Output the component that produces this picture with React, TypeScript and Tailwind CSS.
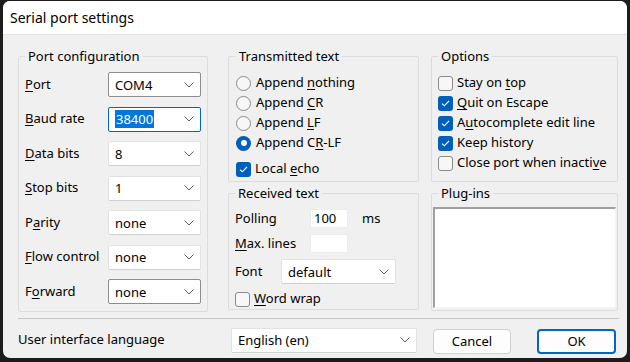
import type { ReactNode } from 'react';

const font = { fontFamily: '"Noto Sans", "Liberation Sans", sans-serif' };

function U({ children }: { children: ReactNode }) {
  return <span className="underline underline-offset-2 decoration-1">{children}</span>;
}

function Chevron() {
  return (
    <svg width="10" height="6" viewBox="0 0 10 6" className="shrink-0">
      <path d="M0.5 0.5 L5 5 L9.5 0.5" fill="none" stroke="#5f5f5f" strokeWidth="1" />
    </svg>
  );
}

function Combo({ value, w, dark, focus, selected }: { value: string; w: string; dark?: boolean; focus?: boolean; selected?: boolean }) {
  const border = focus ? 'border-[#0067c0]' : dark ? 'border-[#8c8c8c]' : 'border-[#e2e2e2] border-b-[#d0d0d0]';
  return (
    <div className={`${w} h-[25px] bg-white border ${border} rounded-[2px] flex items-center justify-between pl-[6px] pr-[6px]`}>
      {selected ? (
        <span className="bg-[#0078d7] text-white px-[1px] leading-[18px]">{value}</span>
      ) : (
        <span className="leading-[18px]">{value}</span>
      )}
      <Chevron />
    </div>
  );
}

function Group({ title, className, legend, children }: { title: string; className: string; legend: string; children: ReactNode }) {
  return (
    <fieldset className={`border border-[#dcdcdc] rounded-[2px] ${className}`}>
      <legend className={`${legend} px-[3px] leading-[18px] text-[13px]`}>{title}</legend>
      {children}
    </fieldset>
  );
}

function Radio({ on, children }: { on?: boolean; children: ReactNode }) {
  return (
    <div className="h-[20px] flex items-center gap-[5px]">
      {on ? (
        <span className="w-[15px] h-[15px] rounded-full bg-[#005fb8] flex items-center justify-center">
          <span className="w-[6px] h-[6px] rounded-full bg-white" />
        </span>
      ) : (
        <span className="w-[15px] h-[15px] rounded-full border border-[#8a8a8a] bg-[#f7f7f7]" />
      )}
      <span>{children}</span>
    </div>
  );
}

function Check({ on, children }: { on?: boolean; children: ReactNode }) {
  return (
    <div className="h-[20px] flex items-center gap-[4px]">
      {on ? (
        <span className="w-[15px] h-[15px] rounded-[3px] bg-[#005fb8] flex items-center justify-center">
          <svg width="9" height="7" viewBox="0 0 9 7">
            <path d="M1 3.6 L3.3 5.8 L8 1" fill="none" stroke="white" strokeWidth="1.1" />
          </svg>
        </span>
      ) : (
        <span className="w-[15px] h-[15px] rounded-[3px] border border-[#8a8a8a] bg-[#f7f7f7]" />
      )}
      <span>{children}</span>
    </div>
  );
}

const rows: { label: ReactNode; value: string; dark?: boolean; focus?: boolean; selected?: boolean }[] = [
  { label: <><U>P</U>ort</>, value: 'COM4', dark: true },
  { label: <><U>B</U>aud rate</>, value: '38400', focus: true, selected: true },
  { label: <><U>D</U>ata bits</>, value: '8' },
  { label: <><U>S</U>top bits</>, value: '1' },
  { label: <>P<U>a</U>rity</>, value: 'none' },
  { label: <><U>F</U>low control</>, value: 'none' },
  { label: <>F<U>o</U>rward</>, value: 'none', dark: true },
];

export default function App() {
  return (
    <div className="w-[630px] h-[362px] bg-[#1c1c1c] pl-[3px] pt-[1px] overflow-hidden" style={font}>
      <div className="w-[624px] h-[357px] rounded-[7px] overflow-hidden flex flex-col bg-[#f0f0f0] text-[13px] text-black">
        <div className="h-[34px] shrink-0 bg-white border-b border-[#e3e3e3] flex items-center pl-[7px] text-[14px]">
          Serial port settings
        </div>
        <div className="flex-1 pl-[15px] pr-[8px] pt-[12px]">
          <div className="flex">
            <Group title="Port configuration" legend="ml-0" className="w-[190px] h-[265px] px-[6px] pt-[7px]">
              <div className="flex flex-col gap-[9.5px]">
                {rows.map((r, i) => (
                  <div key={i} className="flex items-center justify-between">
                    <span>{r.label}</span>
                    <Combo value={r.value} w="w-[93px]" dark={r.dark} focus={r.focus} selected={r.selected} />
                  </div>
                ))}
              </div>
            </Group>

            <div className="w-[191px] ml-[20px] flex flex-col">
              <Group title="Transmitted text" legend="ml-0" className="h-[135px] px-[7px] pt-[8px]">
                <Radio>Append <U>n</U>othing</Radio>
                <Radio>Append <U>C</U>R</Radio>
                <Radio>Append <U>L</U>F</Radio>
                <Radio on>Append C<U>R</U>-LF</Radio>
                <div className="mt-[6px]">
                  <Check on>Local <U>e</U>cho</Check>
                </div>
              </Group>
              <Group title="Received text" legend="ml-0" className="mt-[2px] h-[126px] px-[6px] pt-[7px]">
                <div className="flex items-center h-[19px]">
                  <span className="w-[75px]">Polling</span>
                  <span className="w-[38px] h-[19px] bg-white border border-[#ececec] px-[3px] leading-[17px]">100</span>
                  <span className="ml-[14px]">ms</span>
                </div>
                <div className="flex items-center h-[19px] mt-[6px]">
                  <span className="w-[75px]"><U>M</U>ax. lines</span>
                  <span className="w-[38px] h-[19px] bg-white border border-[#ececec]" />
                </div>
                <div className="flex items-center mt-[6px]">
                  <span className="w-[46px]">Font</span>
                  <Combo value="default" w="w-[115px]" />
                </div>
                <div className="mt-[5px]">
                  <Check><U>W</U>ord wrap</Check>
                </div>
              </Group>
            </div>

            <div className="w-[187px] ml-[12px] flex flex-col">
              <Group title="Options" legend="ml-0" className="h-[135px] px-[6px] pt-[8px]">
                <Check>Stay on <U>t</U>op</Check>
                <Check on><U>Q</U>uit on Escape</Check>
                <Check on>A<U>u</U>tocomplete edit line</Check>
                <Check on>Keep history</Check>
                <Check>Close port when inacti<U>v</U>e</Check>
              </Group>
              <Group title="Plug-ins" legend="ml-[5px]" className="mt-[2px] h-[127px] px-[1px] pt-[5px] pb-[2px]">
                <div className="h-[101px] bg-white border-t-2 border-l-2 border-t-[#a0a0a0] border-l-[#a0a0a0] border-r border-b border-r-[#f5f5f5] border-b-[#f5f5f5]" />
              </Group>
            </div>
          </div>

          <div className="mt-[6px] w-[601px] h-px bg-[#c8c8c8]" />

          <div className="flex items-center mt-[7px]">
            <span className="w-[213px]">User interface language</span>
            <Combo value="English (en)" w="w-[186px]" />
            <button className="ml-[16px] w-[78px] h-[25px] bg-[#fdfdfd] border border-[#d0d0d0] rounded-[4px] mt-[3px]">Cancel</button>
            <button className="ml-[26px] w-[79px] h-[25px] bg-[#fdfdfd] border-2 border-[#0067c0] rounded-[4px] mt-[3px]">OK</button>
          </div>
        </div>
      </div>
    </div>
  );
}
